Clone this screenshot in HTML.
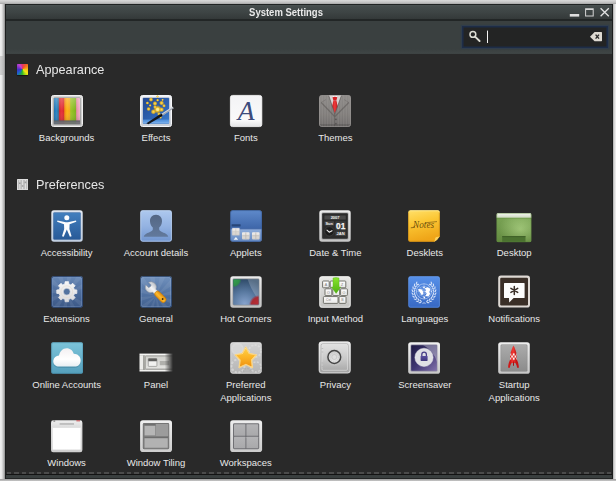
<!DOCTYPE html>
<html><head><meta charset="utf-8">
<style>
html,body{margin:0;padding:0;}
body{width:616px;height:481px;overflow:hidden;background:linear-gradient(90deg,#f1f1f1 0,#e8e8e8 1.5px,#c6c6c6 3.2px,#8c8c8c 5px,#8c8c8c 612px,#b4b4b4 613.2px,#e2e2e2 614.8px,#f0f0f0 616px);position:relative;font-family:"Liberation Sans",sans-serif;}
#topbg{position:absolute;left:0;top:0;width:616px;height:4px;background:linear-gradient(#dadada,#c6c6c6 55%,#a6a6a6);}
#botbg{position:absolute;left:0;top:479px;width:616px;height:2px;background:linear-gradient(#9a9a9a,#c8c8c8);}
#win{position:absolute;left:5px;top:4px;width:607.5px;height:475px;background:#292929;overflow:hidden;}
#title{position:absolute;left:0;top:0;right:0;height:14px;background:linear-gradient(#4b5252,#434a4a 14%,#3e4545 50%,#343939);border-top:1px solid #1f2323;}
#title .t{position:absolute;left:0;width:562px;top:1.4px;text-align:center;color:#e9e9e9;font-weight:bold;font-size:10px;line-height:14px;transform:scaleX(.95);}
#tsep{position:absolute;left:0;right:0;top:15px;height:2px;background:#222626;}
#tool{position:absolute;left:0;right:0;top:17px;height:33px;background:linear-gradient(#3a4040,#3a4040 28px,#3f4545 32px,#3c4242);}
#search{position:absolute;left:457px;top:5px;width:146px;height:21.5px;background:#232424;box-shadow:inset 0 0 0 1.6px #1d2c47,0 0 1px 1px rgba(40,58,84,.55);}
.sec{position:absolute;color:#e6e6e6;font-size:13px;line-height:16px;transform:scaleX(.975);transform-origin:0 0;white-space:nowrap;}
.lbl{position:absolute;width:110px;text-align:center;color:#e8e8e8;font-size:9.5px;line-height:13px;white-space:nowrap;}
.ic{position:absolute;width:32px;height:32px;}
.ic svg{display:block;overflow:visible;}
#dash{position:absolute;left:2px;right:2px;top:468px;height:2px;background:repeating-linear-gradient(90deg,#4b4b4b 0,#4b4b4b 4px,#2b2b2b 4.5px,#2b2b2b 7px,#4b4b4b 7.5px);}
#bot1{position:absolute;left:0;right:0;top:470px;height:1px;background:#131313;}
#bot2{position:absolute;left:0;right:0;top:471px;height:3px;background:#393e3e;border-bottom:1px solid #242626;}
#lb{position:absolute;left:0;top:0;width:1px;bottom:0;background:#1c1e1e;}
#rb{position:absolute;right:0;top:0;width:1px;bottom:0;background:#1c1e1e;}
</style></head><body>
<div id="topbg"></div><div style="position:absolute;left:0;top:56px;width:4px;height:19px;background:linear-gradient(90deg,#c9c9c9,#b4b4b4);opacity:.8"></div><div id="botbg"></div>
<div id="win">
<div id="title"><div class="t">System Settings</div><svg style="position:absolute;left:560px;top:0" viewBox="0 0 48 15" width="48" height="15">
<rect x="4.8" y="9" width="9.4" height="2.6" fill="#dedede"/>
<path d="M20.1 3.2 H28.7 V11.6 H20.1Z M21.1 5 V10.6 H27.7 V5Z" fill="#d6d6d6" fill-rule="evenodd"/>
<path d="M35.6 3.2 L43.8 11.2 M43.8 3.2 L35.6 11.2" stroke="#e2e2e2" stroke-width="1.3"/>
</svg></div>
<div id="tsep"></div>
<div id="tool"><div id="search"><svg style="position:absolute;left:0;top:0" viewBox="0 0 146 22" width="146" height="22">
<circle cx="10.9" cy="8.4" r="2.9" fill="none" stroke="#dcdcd4" stroke-width="1.5"/>
<path d="M13 10.6 L17.6 15" stroke="#dcdcd4" stroke-width="1.9" stroke-linecap="round"/>
<rect x="25" y="4.6" width="1" height="12.4" fill="#f4f4f4"/>
<path d="M128 10.7 L132.6 6 H139.4 Q140 6 140 6.6 V14.6 Q140 15.2 139.4 15.2 H132.6Z" fill="#dedad2"/>
<path d="M133.6 8.6 L137 12.6 M137 8.6 L133.6 12.6" stroke="#2a2a2a" stroke-width="1.4"/>
</svg></div></div>
<div style="position:absolute;left:12px;top:59.8px;width:11.2px;height:11.4px;border-radius:.6px;background:conic-gradient(from 0deg at 50% 48%,#e63668 0deg,#ef5a28 35deg,#f58a18 65deg,#f8c414 95deg,#f2e814 130deg,#9ad81a 155deg,#3cbc22 180deg,#1e9c5a 200deg,#1f5ed2 230deg,#3a36c4 262deg,#7a30c8 290deg,#c044d2 325deg,#e63668 360deg);box-shadow:0 1px 1px rgba(0,0,0,.5)"></div><svg style="position:absolute;left:12px;top:174.8px" viewBox="0 0 11.2 11.2" width="11.2" height="11.2">
<rect x="0" y="0" width="11.2" height="11.2" rx=".6" fill="#e2e2e2"/>
<rect x=".9" y=".9" width="9.4" height="9.4" fill="#bcbcbc"/>
<path d="M2.8 1v9.2M5.6 1v9.2M8.4 1v9.2" stroke="#e6e6e6" stroke-width=".9"/>
<path d="M2 3.4h1.6v1.6H2zM4.8 6.2h1.6v1.6H4.8zM7.6 2.6h1.6v1.6H7.6z" fill="#9c9c9c"/>
</svg>
<div class="sec" style="left:30.6px;top:58.3px">Appearance</div>
<div class="sec" style="left:30.6px;top:173.3px">Preferences</div>
<div class="ic" style="left:46.0px;top:91px"><svg viewBox="0 0 32 32" width="32" height="32"><defs>
<linearGradient id="bgF" x1="0" y1="0" x2="0" y2="1"><stop offset="0" stop-color="#e4e4e4"/><stop offset="1" stop-color="#b4b4b4"/></linearGradient>
<linearGradient id="bgS" x1="0" y1="0" x2="0" y2="1"><stop offset="0" stop-color="#fff" stop-opacity=".25"/><stop offset=".5" stop-color="#fff" stop-opacity="0"/><stop offset="1" stop-color="#000" stop-opacity=".2"/></linearGradient>
<linearGradient id="bgC" x1="0" y1="0" x2="1" y2="0">
<stop offset="0" stop-color="#1d6fae"/><stop offset=".1" stop-color="#2b86c6"/><stop offset=".17" stop-color="#3a6f9a"/>
<stop offset=".2" stop-color="#d22a2e"/><stop offset=".3" stop-color="#e8323a"/><stop offset=".38" stop-color="#d52a2c"/>
<stop offset=".41" stop-color="#f08a10"/><stop offset=".5" stop-color="#fcb414"/><stop offset=".6" stop-color="#f5a81c"/>
<stop offset=".64" stop-color="#9ec428"/><stop offset=".75" stop-color="#8cbc20"/><stop offset=".84" stop-color="#7db01e"/>
<stop offset=".87" stop-color="#e88aa8"/><stop offset="1" stop-color="#f0b4c8"/></linearGradient>
</defs>
<rect x=".5" y=".5" width="31" height="31" rx="2" fill="url(#bgF)" stroke="#f0f0f0"/>
<rect x="1.5" y="1.5" width="29" height="29" rx="1.2" fill="none" stroke="#d2d2d2" stroke-opacity=".7"/>
<rect x="2.5" y="2.5" width="27" height="27" rx="1" fill="#868686"/>
<rect x="3" y="3" width="26" height="26" rx=".6" fill="url(#bgC)"/>
<rect x="3" y="3" width="26" height="26" rx=".6" fill="url(#bgS)"/>
<rect x="3" y="25.6" width="26" height="3.4" fill="#6e7176" opacity=".92"/>
<rect x="3" y="25.6" width="26" height=".8" fill="#55585c" opacity=".8"/>
</svg></div>
<div class="lbl" style="left:6.6px;top:127.2px">Backgrounds</div>
<div class="ic" style="left:135.3px;top:91px"><svg viewBox="0 0 32 32" width="32" height="32"><defs>
<linearGradient id="efF" x1="0" y1="0" x2="0" y2="1"><stop offset="0" stop-color="#f1f3f7"/><stop offset="1" stop-color="#c9ced6"/></linearGradient>
<linearGradient id="efB" x1="0" y1="0" x2="1" y2="1"><stop offset="0" stop-color="#244890"/><stop offset=".6" stop-color="#2e64b4"/><stop offset="1" stop-color="#3b7ccc"/></linearGradient>
<radialGradient id="efG"><stop offset="0" stop-color="#ffe060"/><stop offset=".5" stop-color="#f5c020" stop-opacity=".9"/><stop offset="1" stop-color="#e0a010" stop-opacity="0"/></radialGradient>
<linearGradient id="efW" x1="0" y1="0" x2="1" y2="0"><stop offset="0" stop-color="#8a9098"/><stop offset=".5" stop-color="#f4f6f8"/><stop offset="1" stop-color="#b8bcc4"/></linearGradient>
</defs>
<rect x=".5" y=".5" width="31" height="31" rx="2" fill="url(#efF)" stroke="#f6f7fa"/>
<rect x="2.6" y="2.6" width="26.8" height="26.2" rx="1" fill="#8fa0bc"/>
<rect x="3" y="3" width="26" height="25.4" rx=".6" fill="url(#efB)"/>
<rect x="3" y="24.6" width="26" height="3.8" fill="#5b9ae2" opacity=".85"/>
<rect x="3" y="26.6" width="26" height="1.8" fill="#7fb4ee" opacity=".7"/>
<g fill="url(#efG)">
<circle cx="11" cy="4.6" r="2.4"/><circle cx="7.4" cy="8" r="1.8"/><circle cx="10.2" cy="10.4" r="1.5"/><circle cx="8.6" cy="14" r="2.2"/>
<circle cx="15" cy="8.5" r="2.6"/><circle cx="17.6" cy="5.2" r="1.6"/><circle cx="21.6" cy="8" r="2.6"/><circle cx="24" cy="10.8" r="2"/><circle cx="22.6" cy="4.8" r="1.4"/>
<circle cx="17.6" cy="14.4" r="4.4"/><circle cx="13.4" cy="16.8" r="2.8"/><circle cx="21.6" cy="14.6" r="2.6"/><circle cx="19" cy="19" r="2"/><circle cx="15" cy="12" r="2"/>
<circle cx="20.5" cy="22.4" r="1.6"/><circle cx="17.5" cy="1.5" r="1.5"/>
</g>
<circle cx="17.6" cy="14.4" r="1.6" fill="#fff3a0" opacity=".8"/>
<path d="M6.4 28.2 L20.4 19 L22 21.2 L8.4 29.2Z" fill="#15171c"/>
<path d="M20.4 19.5 L32.6 11.6 L33.6 13.2 L21.6 21.2Z" fill="#d4d8de"/>
<path d="M20.9 20.3 L33.1 12.4 L33.6 13.2 L21.6 21.2Z" fill="#9aa0aa"/>
<path d="M19.8 19.9 L21.6 18.8 L22.8 20.5 L21 21.6Z" fill="#0c0d10"/>
</svg></div>
<div class="lbl" style="left:96.0px;top:127.2px">Effects</div>
<div class="ic" style="left:224.6px;top:91px"><svg viewBox="0 0 32 32" width="32" height="32"><defs>
<linearGradient id="foF" x1="0" y1="0" x2="0" y2="1"><stop offset="0" stop-color="#f3f3f5"/><stop offset=".8" stop-color="#fafafa"/><stop offset="1" stop-color="#e4e4e6"/></linearGradient>
</defs>
<rect x=".4" y=".4" width="31.4" height="31.2" rx="2.2" fill="url(#foF)" stroke="#ffffff" stroke-width=".8"/>
<text x="16.1" y="24.7" text-anchor="middle" font-family="'Liberation Serif',serif" font-style="italic" font-size="27.5" fill="#3d4c7c">A</text>
</svg></div>
<div class="lbl" style="left:185.8px;top:127.2px">Fonts</div>
<div class="ic" style="left:313.9px;top:91px"><svg viewBox="0 0 32 32" width="32" height="32"><defs>
<linearGradient id="thF" x1="0" y1="0" x2="0" y2="1"><stop offset="0" stop-color="#8d8a88"/><stop offset=".6" stop-color="#7f7c7a"/><stop offset="1" stop-color="#6d6a69"/></linearGradient>
<pattern id="thP" width="1.6" height="4" patternUnits="userSpaceOnUse"><rect width=".5" height="4" fill="#b8b0ac" opacity=".35"/></pattern>
<linearGradient id="thT" x1="0" y1="0" x2="1" y2="0"><stop offset="0" stop-color="#c81a1e"/><stop offset=".5" stop-color="#ee3a3a"/><stop offset="1" stop-color="#b01418"/></linearGradient>
<clipPath id="thC"><rect x=".3" y=".3" width="31.6" height="31.4" rx="2.4"/></clipPath>
</defs>
<g clip-path="url(#thC)">
<rect width="32" height="32" fill="url(#thF)"/>
<rect width="32" height="32" fill="url(#thP)"/>
<path d="M9.6 0 L22.6 0 L15.8 19.2Z" fill="#f2f0f0"/>
<path d="M9.6 0 L13.4 0 L15.2 6 L12.6 9.5Z" fill="#d8d4d4"/>
<path d="M22.6 0 L18.6 0 L16.6 6 L19.4 9.5Z" fill="#d8d4d4"/>
<path d="M13.5 2.2 Q15.9 1.3 18.3 2.2 L17.4 5.6 Q15.9 6.1 14.4 5.6Z" fill="#d42226"/>
<path d="M14.4 5.6 Q15.9 6.1 17.4 5.6 L19 12 L15.9 18.9 L12.8 12Z" fill="url(#thT)"/>
<path d="M0 3 L9.6 0 L15.8 19.2 L15.8 32 L0 32Z" fill="url(#thF)"/>
<path d="M32 3 L22.6 0 L15.8 19.2 L15.8 32 L32 32Z" fill="url(#thF)"/>
<path d="M0 3 L9.6 0 L15.8 19.2 L15.8 32 L0 32Z M32 3 L22.6 0 L15.8 19.2 L15.8 32 L32 32Z" fill="url(#thP)"/>
<path d="M9.6 0 L15.8 19.2 L22.6 0" fill="none" stroke="#5a5655" stroke-width=".8" opacity=".8"/>
<path d="M2.2 7.5 L15.6 21.5" stroke="#55514f" stroke-width="1.2" opacity=".5"/>
<path d="M29.8 7.5 L16 21.5" stroke="#55514f" stroke-width="1.2" opacity=".5"/>
<path d="M2.2 7.5 L7 4.5 M29.8 7.5 L25 4.5" stroke="#5a5654" stroke-width=".8" opacity=".35"/>
<path d="M15.8 19.2 L15.8 32" stroke="#5f5b5a" stroke-width=".7"/>
<circle cx="16.9" cy="24.3" r=".9" fill="#5a5655"/><circle cx="16.9" cy="28.6" r=".9" fill="#5a5655"/>
<rect y="29" width="32" height="3" fill="#000" opacity=".12"/>
</g>
<rect x=".5" y=".5" width="31" height="31" rx="2.2" fill="none" stroke="#9c9998" stroke-opacity=".6"/>
</svg></div>
<div class="lbl" style="left:275.4px;top:127.2px">Themes</div>
<div class="ic" style="left:46.0px;top:206px"><svg viewBox="0 0 32 32" width="32" height="32"><defs>
<linearGradient id="acB" x1="0" y1="0" x2="0" y2="1"><stop offset="0" stop-color="#427fbe"/><stop offset="1" stop-color="#285a98"/></linearGradient>
<linearGradient id="acF" x1="0" y1="0" x2="0" y2="1"><stop offset="0" stop-color="#e4ebf4"/><stop offset="1" stop-color="#c4d2e4"/></linearGradient>
</defs>
<rect x=".3" y=".3" width="31.4" height="31.4" rx="2.6" fill="url(#acF)"/>
<rect x="2.4" y="2.4" width="27.2" height="27.2" rx="1" fill="url(#acB)"/>
<rect x="2.4" y="2.4" width="27.2" height="27.2" rx="1" fill="none" stroke="#2a5288" stroke-width=".6" opacity=".6"/>
<g fill="#fbfcfe">
<circle cx="15.8" cy="7.7" r="2.5"/>
<path d="M6.4 10.4 L13.6 12 Q15.8 12.5 18 12 L25 10.4 L25.3 11.8 L18.6 14.2 L18.4 19 L20.6 26.3 L18.9 26.8 L15.8 19.6 L12.7 26.8 L11 26.3 L13.2 19 L13 14.2 L6.1 11.8Z"/>
</g>
</svg></div>
<div class="lbl" style="left:6.6px;top:242.2px">Accessibility</div>
<div class="ic" style="left:135.3px;top:206px"><svg viewBox="0 0 32 32" width="32" height="32"><defs>
<linearGradient id="adB" x1="0" y1="0" x2="0" y2="1"><stop offset="0" stop-color="#adc8ee"/><stop offset=".5" stop-color="#94b3e2"/><stop offset="1" stop-color="#7195cf"/></linearGradient>
<linearGradient id="adS" x1="0" y1="0" x2="0" y2="1"><stop offset="0" stop-color="#546784"/><stop offset="1" stop-color="#62799c"/></linearGradient>
</defs>
<rect x=".3" y=".3" width="31.6" height="31.4" rx="2.4" fill="url(#adB)"/>
<rect x=".8" y=".8" width="30.6" height="30.4" rx="2" fill="none" stroke="#c6d9f4" stroke-opacity=".6"/>
<path d="M16 4.8 C20 4.8 22.2 7.8 22 11.4 C21.8 14.4 20.6 16.2 19.2 17.4 L19.2 19.6 C19.6 21.4 23 22.6 25.4 23.6 C27 24.4 28 25.6 28.2 26.8 L3.8 26.8 C4 25.6 5 24.4 6.6 23.6 C9 22.6 12.4 21.4 12.8 19.6 L12.8 17.4 C11.4 16.2 10.2 14.4 10 11.4 C9.8 7.8 12 4.8 16 4.8Z" fill="url(#adS)"/>
</svg></div>
<div class="lbl" style="left:96.0px;top:242.2px">Account details</div>
<div class="ic" style="left:224.6px;top:206px"><svg viewBox="0 0 32 32" width="32" height="32"><defs>
<linearGradient id="apT" x1="0" y1="0" x2="0" y2="1"><stop offset="0" stop-color="#5f8acb"/><stop offset="1" stop-color="#3d65a8"/></linearGradient>
<linearGradient id="apL" x1="0" y1="0" x2="0" y2="1"><stop offset="0" stop-color="#90aedb"/><stop offset="1" stop-color="#6388c2"/></linearGradient>
<linearGradient id="apW" x1="0" y1="0" x2="0" y2="1"><stop offset="0" stop-color="#f0eeec"/><stop offset="1" stop-color="#d2cdc8"/></linearGradient>
<clipPath id="apC"><rect x=".3" y=".3" width="31.6" height="31.4" rx="2.6"/></clipPath>
</defs>
<g clip-path="url(#apC)">
<rect width="32" height="19" fill="url(#apT)"/>
<rect y="18.8" width="32" height="13.2" fill="url(#apL)"/>
<rect y="18.6" width="32" height=".7" fill="#2c4f8e" opacity=".7"/>
<rect x="1.6" y="14.3" width="9" height="2.1" rx=".3" fill="#274678"/>
<rect x="2" y="18" width="7.7" height="7.6" rx=".8" fill="url(#apW)" stroke="#8aa0c4" stroke-width=".4"/>
<rect x="12" y="22.2" width="7.6" height="7.2" rx=".8" fill="url(#apW)"/>
<rect x="22" y="22.2" width="7.6" height="7.2" rx=".8" fill="url(#apW)"/>
<path d="M15.8 22.4v6.8M12.2 25.8h7.2M25.8 22.4v6.8M22.2 25.8h7.2" stroke="#b9b4b0" stroke-width=".7"/>
<path d="M5.8 18.4v6.8M2.3 21.8h7.2" stroke="#c4c0bc" stroke-width=".6"/>
<path d="M3.6 29.8 L5.9 27 L8.2 29.8Z" fill="#eef3fa"/>
</g>
<rect x=".6" y=".6" width="30.8" height="30.8" rx="2.3" fill="none" stroke="#3a5f9e" stroke-width=".7" opacity=".8"/>
</svg></div>
<div class="lbl" style="left:185.8px;top:242.2px">Applets</div>
<div class="ic" style="left:313.9px;top:206px"><svg viewBox="0 0 32 32" width="32" height="32"><defs>
<linearGradient id="dtF" x1="0" y1="0" x2="0" y2="1"><stop offset="0" stop-color="#ededed"/><stop offset="1" stop-color="#c6c6c6"/></linearGradient>
</defs>
<rect x=".3" y=".3" width="31.4" height="31.4" rx="2.6" fill="url(#dtF)"/>
<rect x="2.6" y="2.6" width="26.8" height="26.8" rx="1.2" fill="#9a9a9a"/>
<rect x="3.2" y="3.2" width="25.6" height="25.6" rx="1" fill="#2b2b2b"/>
<rect x="5.4" y="5.4" width="21.4" height="4" rx=".5" fill="#4a4a4a"/>
<rect x="5.4" y="11.2" width="9.6" height="4.2" rx=".5" fill="#454545"/>
<rect x="16.4" y="11.2" width="10.4" height="9.2" rx=".6" fill="#3c3c3c"/>
<rect x="16.4" y="21.6" width="10.4" height="4.4" rx=".5" fill="#454545"/>
<circle cx="10.4" cy="21.4" r="4.7" fill="#1c1c1c" stroke="#4a4a4a" stroke-width=".6"/>
<path d="M8 20.2 L10.2 22.2 L13 20.7" fill="none" stroke="#f2f2f2" stroke-width="1.1" stroke-linecap="round" stroke-linejoin="round"/>
<g font-family="'Liberation Sans',sans-serif" font-weight="bold" fill="#f4f4f4" text-anchor="middle">
<text x="16.1" y="8.7" font-size="4">2007</text>
<text x="10.2" y="14.6" font-size="3.9">Sun</text>
<text x="21.7" y="19.2" font-size="8.8" textLength="9.2" lengthAdjust="spacingAndGlyphs" stroke="#f4f4f4" stroke-width=".25">01</text>
<text x="21.6" y="25.3" font-size="4">JAN</text>
</g>
</svg></div>
<div class="lbl" style="left:275.4px;top:242.2px">Date &amp; Time</div>
<div class="ic" style="left:403.2px;top:206px"><svg viewBox="0 0 32 32" width="32" height="32"><defs>
<linearGradient id="dkB" x1="0" y1="0" x2=".25" y2="1"><stop offset="0" stop-color="#ffe06a"/><stop offset=".45" stop-color="#fbc633"/><stop offset="1" stop-color="#efa518"/></linearGradient>
<linearGradient id="dkC" x1="0" y1="0" x2="1" y2="1"><stop offset="0" stop-color="#ffe27a"/><stop offset="1" stop-color="#f6bd3a"/></linearGradient>
</defs>
<path d="M2.2 .3 H29.8 Q31.8 .3 31.8 2.3 V26.5 L26.5 31.7 H2.2 Q.2 31.7 .2 29.7 V2.3 Q.2 .3 2.2 .3Z" fill="url(#dkB)"/>
<path d="M2.2 .8 H29.8 Q31.3 .8 31.3 2.3" fill="none" stroke="#ffeb9a" stroke-width=".9" opacity=".9"/>
<path d="M.7 2.3 V29.7 Q.7 31.2 2.2 31.2 H26.3 L31.3 26.3 V2.3" fill="none" stroke="#d68f10" stroke-width=".7" opacity=".7"/>
<path d="M31.8 26.2 Q28.5 27.2 27.6 27.6 Q27 29.5 26.3 31.7 Q29.6 30.4 31.8 26.2Z" fill="url(#dkC)"/>
<text x="15.6" y="17.8" text-anchor="middle" font-family="'Liberation Serif',serif" font-style="italic" font-size="10" textLength="21" lengthAdjust="spacingAndGlyphs" fill="#4a3306" fill-opacity=".82">Notes</text>
<path d="M17 12.8 L29 11.6" stroke="#4a3306" stroke-width=".5"/>
<path d="M2.8 17.8 Q5 18.4 7.4 15.6" fill="none" stroke="#4a3306" stroke-width=".6"/>
</svg></div>
<div class="lbl" style="left:364.8px;top:242.2px">Desklets</div>
<div class="ic" style="left:492.5px;top:206px"><svg viewBox="0 0 32 32" width="32" height="32"><defs>
<radialGradient id="dsG" cx=".68" cy=".55" r=".6"><stop offset="0" stop-color="#a2cc76"/><stop offset="1" stop-color="#6f9c47"/></radialGradient>
<linearGradient id="dsT" x1="0" y1="0" x2="0" y2="1"><stop offset="0" stop-color="#f6f8f2"/><stop offset="1" stop-color="#cdd8c0"/></linearGradient>
<linearGradient id="dsV" x1="0" y1="0" x2="0" y2="1"><stop offset="0" stop-color="#fff" stop-opacity=".08"/><stop offset="1" stop-color="#000" stop-opacity=".12"/></linearGradient>
<clipPath id="dsC"><rect x="-1.6" y="3.1" width="35.1" height="29.1" rx="1.8"/></clipPath>
</defs>
<g clip-path="url(#dsC)">
<rect x="-1.6" y="3.1" width="35.1" height="29.1" fill="url(#dsG)"/>
<rect x="-1.6" y="3.1" width="35.1" height="29.1" fill="url(#dsV)"/>
<rect x="-1.6" y="3.1" width="35.1" height="4.7" fill="url(#dsT)"/>
<rect x="-1.6" y="7.8" width="35.1" height=".8" fill="#5f8a3a" opacity=".55"/>
<rect x="4.2" y="26.2" width="23.3" height="6" fill="#4b7230"/>
<rect x="4.2" y="26.2" width="23.3" height=".9" fill="#3c5e26"/>
</g>
<rect x="-1.2" y="3.5" width="34.3" height="28.3" rx="1.5" fill="none" stroke="#5d8a3a" stroke-width=".7" opacity=".5"/>
</svg></div>
<div class="lbl" style="left:454.2px;top:242.2px">Desktop</div>
<div class="ic" style="left:46.0px;top:272px"><svg viewBox="0 0 32 32" width="32" height="32"><defs>
<linearGradient id="exB" x1="0" y1="0" x2="0" y2="1"><stop offset="0" stop-color="#6888b6"/><stop offset=".55" stop-color="#4b6a9a"/><stop offset="1" stop-color="#3c5886"/></linearGradient>
<linearGradient id="exG" x1="0" y1="0" x2="0" y2="1"><stop offset="0" stop-color="#f6f6f7"/><stop offset="1" stop-color="#d9dade"/></linearGradient>
<clipPath id="exC"><rect x=".3" y=".3" width="31.6" height="31.4" rx="2.4"/></clipPath>
</defs>
<g clip-path="url(#exC)">
<rect width="32" height="32" fill="url(#exB)"/>
<path d="M13.85 8.05 L14.07 5.65 L17.53 5.65 L17.75 8.05 L19.83 8.91 L21.69 7.37 L24.13 9.81 L22.59 11.67 L23.45 13.75 L25.85 13.97 L25.85 17.43 L23.45 17.65 L22.59 19.73 L24.13 21.59 L21.69 24.03 L19.83 22.49 L17.75 23.35 L17.53 25.75 L14.07 25.75 L13.85 23.35 L11.77 22.49 L9.91 24.03 L7.47 21.59 L9.01 19.73 L8.15 17.65 L5.75 17.43 L5.75 13.97 L8.15 13.75 L9.01 11.67 L7.47 9.81 L9.91 7.37 L11.77 8.91Z M16 17 L50.6 37.0 L44.3 45.3Z M16 17 L36.0 51.6 L26.4 55.6Z M16 17 L16.0 57.0 L5.6 55.6Z M16 17 L-4.0 51.6 L-12.3 45.3Z M16 17 L-18.6 37.0 L-22.6 27.4Z M16 17 L-24.0 17.0 L-22.6 6.6Z M16 17 L-18.6 -3.0 L-12.3 -11.3Z M16 17 L-4.0 -17.6 L5.6 -21.6Z M16 17 L16.0 -23.0 L26.4 -21.6Z M16 17 L36.0 -17.6 L44.3 -11.3Z M16 17 L50.6 -3.0 L54.6 6.6Z" fill="#fff" opacity=".07"/>
</g>
<rect x=".6" y=".6" width="30.9" height="30.8" rx="2.2" fill="none" stroke="#263e66" stroke-width=".8"/>
<rect x="1.5" y="1.5" width="29" height="29" rx="1.5" fill="none" stroke="#86a7d4" stroke-width=".6" opacity=".55"/>
<path d="M13.85 8.05 L14.07 5.65 L17.53 5.65 L17.75 8.05 L19.83 8.91 L21.69 7.37 L24.13 9.81 L22.59 11.67 L23.45 13.75 L25.85 13.97 L25.85 17.43 L23.45 17.65 L22.59 19.73 L24.13 21.59 L21.69 24.03 L19.83 22.49 L17.75 23.35 L17.53 25.75 L14.07 25.75 L13.85 23.35 L11.77 22.49 L9.91 24.03 L7.47 21.59 L9.01 19.73 L8.15 17.65 L5.75 17.43 L5.75 13.97 L8.15 13.75 L9.01 11.67 L7.47 9.81 L9.91 7.37 L11.77 8.91Z M19.10 15.7 A3.3 3.3 0 1 0 12.50 15.7 A3.3 3.3 0 1 0 19.10 15.7Z" fill="url(#exG)" fill-rule="evenodd" stroke="url(#exG)" stroke-width=".8" stroke-linejoin="round"/>
<circle cx="15.8" cy="15.7" r="3.1" fill="#52729f"/>
<circle cx="15.8" cy="15.7" r="5.9" fill="none" stroke="#e3d6c6" stroke-width=".7" opacity=".7"/>
<circle cx="15.8" cy="15.7" r="3.4" fill="none" stroke="#c9ccd4" stroke-width=".6"/>
</svg></div>
<div class="lbl" style="left:6.6px;top:308.2px">Extensions</div>
<div class="ic" style="left:135.3px;top:272px"><svg viewBox="0 0 32 32" width="32" height="32"><defs>
<linearGradient id="geB" x1="0" y1="0" x2="0" y2="1"><stop offset="0" stop-color="#7292bd"/><stop offset=".55" stop-color="#5273a3"/><stop offset="1" stop-color="#41608f"/></linearGradient>
<linearGradient id="geS" x1="0" y1="0" x2="1" y2="0"><stop offset="0" stop-color="#c9cdd3"/><stop offset=".5" stop-color="#f4f5f7"/><stop offset="1" stop-color="#b9bec6"/></linearGradient>
<linearGradient id="geO" x1="0" y1="0" x2="1" y2="0"><stop offset="0" stop-color="#e8930f"/><stop offset=".45" stop-color="#fdbb2e"/><stop offset="1" stop-color="#e08a0c"/></linearGradient>
<clipPath id="geC"><rect x=".3" y=".3" width="31.6" height="31.4" rx="2.4"/></clipPath>
</defs>
<g clip-path="url(#geC)">
<rect width="32" height="32" fill="url(#geB)"/>
<path d="M16 20 L55.2 27.9 L51.8 37.8Z M16 20 L46.0 46.5 L38.1 53.3Z M16 20 L28.7 57.9 L18.5 59.9Z M16 20 L8.1 59.2 L-1.8 55.8Z M16 20 L-10.5 50.0 L-17.3 42.1Z M16 20 L-21.9 32.7 L-23.9 22.5Z M16 20 L-23.2 12.1 L-19.8 2.2Z M16 20 L-14.0 -6.5 L-6.1 -13.3Z M16 20 L3.3 -17.9 L13.5 -19.9Z M16 20 L23.9 -19.2 L33.8 -15.8Z M16 20 L42.5 -10.0 L49.3 -2.1Z M16 20 L53.9 7.3 L55.9 17.5Z" fill="#fff" opacity=".07"/>
</g>
<rect x=".6" y=".6" width="30.9" height="30.8" rx="2.2" fill="none" stroke="#2a4268" stroke-width=".8"/>
<rect x="1.5" y="1.5" width="29" height="29" rx="1.5" fill="none" stroke="#9ab6dc" stroke-width=".6" opacity=".5"/>
<g transform="translate(10.9 11.3) rotate(-45)">
<path d="M-1.9 -5.2 L-1.9 -1.4 Q0 -.2 1.9 -1.4 L1.9 -5.2 A5.4 5.4 0 0 1 2.2 4.9 L2.2 7.5 L-2.2 7.5 L-2.2 4.9 A5.4 5.4 0 0 1 -1.9 -5.2Z" fill="url(#geS)" stroke="#8e949e" stroke-width=".5"/>
<rect x="-2.9" y="6.6" width="5.8" height="13.6" rx="2.8" fill="url(#geO)" stroke="#b8730a" stroke-width=".5"/>
<circle cx="0" cy="16.6" r=".95" fill="#4a3008"/>
</g>
</svg></div>
<div class="lbl" style="left:96.0px;top:308.2px">General</div>
<div class="ic" style="left:224.6px;top:272px"><svg viewBox="0 0 32 32" width="32" height="32"><defs>
<linearGradient id="hcF" x1="0" y1="0" x2="0" y2="1"><stop offset="0" stop-color="#ececec"/><stop offset="1" stop-color="#c2c2c2"/></linearGradient>
<radialGradient id="hcB" cx=".45" cy=".95" r=".95"><stop offset="0" stop-color="#86a2cc"/><stop offset=".5" stop-color="#58789f"/><stop offset="1" stop-color="#2e4a68"/></radialGradient>
<radialGradient id="hcG" cx="0" cy="0" r="1"><stop offset="0" stop-color="#35a04e"/><stop offset=".75" stop-color="#2f8f48"/><stop offset="1" stop-color="#2a9444" stop-opacity="0"/></radialGradient>
<radialGradient id="hcR" cx="1" cy="1" r="1"><stop offset="0" stop-color="#be2c34"/><stop offset=".75" stop-color="#a82c34"/><stop offset="1" stop-color="#b02830" stop-opacity="0"/></radialGradient>
<clipPath id="hcC"><rect x="3.2" y="3.2" width="25.6" height="25.6" rx="1"/></clipPath>
</defs>
<rect x=".3" y=".3" width="31.4" height="31.4" rx="2.6" fill="url(#hcF)"/>
<rect x="2.6" y="2.6" width="26.8" height="26.8" rx="1.4" fill="#8a8e94"/>
<g clip-path="url(#hcC)">
<rect x="3" y="3" width="26" height="26" fill="url(#hcB)"/>
<path d="M17.5 3 L29 3 L29 24 Q22 16 17.5 3Z" fill="#fff" opacity=".2"/>
<rect x="3.2" y="3.2" width="8.4" height="8.4" fill="url(#hcG)"/>
<rect x="19" y="19" width="9.8" height="9.8" fill="url(#hcR)"/>
</g>
</svg></div>
<div class="lbl" style="left:185.8px;top:308.2px">Hot Corners</div>
<div class="ic" style="left:313.9px;top:272px"><svg viewBox="0 0 32 32" width="32" height="32"><defs>
<linearGradient id="imF" x1="0" y1="0" x2="0" y2="1"><stop offset="0" stop-color="#e9e9e7"/><stop offset="1" stop-color="#c4c4c2"/></linearGradient>
<linearGradient id="imK" x1="0" y1="0" x2="0" y2="1"><stop offset="0" stop-color="#ffffff"/><stop offset="1" stop-color="#e6e6e4"/></linearGradient>
<linearGradient id="imA" x1="0" y1="0" x2="0" y2="1"><stop offset="0" stop-color="#8ae62e"/><stop offset="1" stop-color="#4fae14"/></linearGradient>
</defs>
<rect x=".3" y=".3" width="31.4" height="31.4" rx="2.8" fill="url(#imF)"/>
<rect x=".8" y=".8" width="30.4" height="30.4" rx="2.4" fill="none" stroke="#f4f4f2" stroke-width=".7"/>
<g fill="url(#imK)" stroke="#66665f" stroke-width=".9">
<rect x="3.6" y="5" width="6.6" height="6.8" rx=".8"/><rect x="11.2" y="5" width="7.4" height="6.8" rx=".8"/><rect x="19.6" y="5" width="7.2" height="6.8" rx=".8"/>
<rect x="6" y="12.8" width="6.8" height="6.8" rx=".8"/><rect x="13.8" y="12.8" width="6.8" height="6.8" rx=".8"/><rect x="21.6" y="12.8" width="6.8" height="6.8" rx=".8"/>
<rect x="4.4" y="20.6" width="14.6" height="6.8" rx=".8"/><rect x="20" y="20.6" width="7" height="6.8" rx=".8"/>
</g>
<g font-family="'Liberation Sans',sans-serif" font-size="3.6" fill="#7c7c78" text-anchor="middle">
<text x="6.9" y="9.8">A</text><text x="23.2" y="9.8">Z</text><text x="9.4" y="17.6">O</text><text x="25" y="17.6">O</text><text x="9.6" y="25.3" font-size="3.2">Ctrl</text><text x="23.5" y="25.3">B</text>
</g>
<path d="M14 2 Q17 .9 20 2 L20 11 L21.8 11 L17.1 17.4 L12.4 11 L14 11Z" fill="url(#imA)" stroke="#58b81a" stroke-width=".4"/>
</svg></div>
<div class="lbl" style="left:275.4px;top:308.2px">Input Method</div>
<div class="ic" style="left:403.2px;top:272px"><svg viewBox="0 0 32 32" width="32" height="32"><defs>
<linearGradient id="laB" x1="0" y1="0" x2="0" y2="1"><stop offset="0" stop-color="#5790e8"/><stop offset="1" stop-color="#3768c4"/></linearGradient>
</defs>
<rect x=".3" y=".3" width="31.6" height="31.4" rx="2.2" fill="url(#laB)"/>
<rect x=".8" y=".8" width="30.6" height="30.4" rx="1.8" fill="none" stroke="#79aaf4" stroke-width=".6" opacity=".6"/>
<g fill="#f2f6ff" opacity=".82"><ellipse cx="12.72" cy="24.82" rx="1.55" ry=".62" transform="rotate(-132.0 12.72 24.82)"/><ellipse cx="12.03" cy="26.70" rx="1.55" ry=".62" transform="rotate(-188.0 12.03 26.70)"/><ellipse cx="10.49" cy="23.66" rx="1.55" ry=".62" transform="rotate(-117.0 10.49 23.66)"/><ellipse cx="9.35" cy="25.30" rx="1.55" ry=".62" transform="rotate(-173.0 9.35 25.30)"/><ellipse cx="8.65" cy="21.97" rx="1.55" ry=".62" transform="rotate(-102.0 8.65 21.97)"/><ellipse cx="7.11" cy="23.26" rx="1.55" ry=".62" transform="rotate(-158.0 7.11 23.26)"/><ellipse cx="7.30" cy="19.86" rx="1.55" ry=".62" transform="rotate(-87.0 7.30 19.86)"/><ellipse cx="5.49" cy="20.70" rx="1.55" ry=".62" transform="rotate(-143.0 5.49 20.70)"/><ellipse cx="6.55" cy="17.47" rx="1.55" ry=".62" transform="rotate(-72.0 6.55 17.47)"/><ellipse cx="4.58" cy="17.81" rx="1.55" ry=".62" transform="rotate(-128.0 4.58 17.81)"/><ellipse cx="6.44" cy="14.96" rx="1.55" ry=".62" transform="rotate(-57.0 6.44 14.96)"/><ellipse cx="4.44" cy="14.79" rx="1.55" ry=".62" transform="rotate(-113.0 4.44 14.79)"/><ellipse cx="6.98" cy="12.52" rx="1.55" ry=".62" transform="rotate(-42.0 6.98 12.52)"/><ellipse cx="5.10" cy="11.83" rx="1.55" ry=".62" transform="rotate(-98.0 5.10 11.83)"/><ellipse cx="8.14" cy="10.29" rx="1.55" ry=".62" transform="rotate(-27.0 8.14 10.29)"/><ellipse cx="6.50" cy="9.15" rx="1.55" ry=".62" transform="rotate(-83.0 6.50 9.15)"/><ellipse cx="9.83" cy="8.45" rx="1.55" ry=".62" transform="rotate(-12.0 9.83 8.45)"/><ellipse cx="8.54" cy="6.91" rx="1.55" ry=".62" transform="rotate(-68.0 8.54 6.91)"/><ellipse cx="19.28" cy="24.82" rx="1.55" ry=".62" transform="rotate(-48.0 19.28 24.82)"/><ellipse cx="19.97" cy="26.70" rx="1.55" ry=".62" transform="rotate(8.0 19.97 26.70)"/><ellipse cx="21.51" cy="23.66" rx="1.55" ry=".62" transform="rotate(-63.0 21.51 23.66)"/><ellipse cx="22.65" cy="25.30" rx="1.55" ry=".62" transform="rotate(-7.0 22.65 25.30)"/><ellipse cx="23.35" cy="21.97" rx="1.55" ry=".62" transform="rotate(-78.0 23.35 21.97)"/><ellipse cx="24.89" cy="23.26" rx="1.55" ry=".62" transform="rotate(-22.0 24.89 23.26)"/><ellipse cx="24.70" cy="19.86" rx="1.55" ry=".62" transform="rotate(-93.0 24.70 19.86)"/><ellipse cx="26.51" cy="20.70" rx="1.55" ry=".62" transform="rotate(-37.0 26.51 20.70)"/><ellipse cx="25.45" cy="17.47" rx="1.55" ry=".62" transform="rotate(-108.0 25.45 17.47)"/><ellipse cx="27.42" cy="17.81" rx="1.55" ry=".62" transform="rotate(-52.0 27.42 17.81)"/><ellipse cx="25.56" cy="14.96" rx="1.55" ry=".62" transform="rotate(-123.0 25.56 14.96)"/><ellipse cx="27.56" cy="14.79" rx="1.55" ry=".62" transform="rotate(-67.0 27.56 14.79)"/><ellipse cx="25.02" cy="12.52" rx="1.55" ry=".62" transform="rotate(-138.0 25.02 12.52)"/><ellipse cx="26.90" cy="11.83" rx="1.55" ry=".62" transform="rotate(-82.0 26.90 11.83)"/><ellipse cx="23.86" cy="10.29" rx="1.55" ry=".62" transform="rotate(-153.0 23.86 10.29)"/><ellipse cx="25.50" cy="9.15" rx="1.55" ry=".62" transform="rotate(-97.0 25.50 9.15)"/><ellipse cx="22.17" cy="8.45" rx="1.55" ry=".62" transform="rotate(-168.0 22.17 8.45)"/><ellipse cx="23.46" cy="6.91" rx="1.55" ry=".62" transform="rotate(-112.0 23.46 6.91)"/></g>
<path d="M14.4 27.4 Q16 26.2 17.6 27.4" fill="none" stroke="#f2f6ff" stroke-width=".8" opacity=".8"/>
<g fill="none" stroke="#eef4ff" stroke-linecap="round">
<circle cx="16" cy="15.4" r="7.6" stroke-width=".7" opacity=".7"/>
<circle cx="16" cy="15.4" r="5.2" stroke-width=".5" opacity=".55"/>
<circle cx="16" cy="15.4" r="2.7" stroke-width=".5" opacity=".55"/>
<path d="M16 7.8v15.2M8.4 15.4h15.2M10.6 10l10.8 10.8M21.4 10L10.6 20.8" stroke-width=".5" opacity=".5"/>
</g>
<g fill="#ffffff">
<path d="M9.8 13.6 Q11.6 12.6 13.8 13.4 L14.8 15 L15.4 17.4 L14 19.6 L12.6 17.6 L11.4 15.4Z"/>
<path d="M16.6 12.2 L19.6 11.2 L22 12.4 L22.4 14.4 L20.8 15.2 L22.2 17.8 L20.4 20.4 L17.2 20 L18.8 17.4 L17 15.6 L18.2 14Z"/>
<path d="M14.4 11.6 L16.4 10.2 L17 12.2Z"/>
<path d="M15 20.4 L17.4 21 L16.4 22.8Z"/>
</g>
</svg></div>
<div class="lbl" style="left:364.8px;top:308.2px">Languages</div>
<div class="ic" style="left:492.5px;top:272px"><svg viewBox="0 0 32 32" width="32" height="32">
<rect x=".2" y="-.4" width="31.8" height="32" rx="2.8" fill="#ddd8d3"/>
<rect x="2.2" y="1.7" width="27.8" height="27.8" rx="1.2" fill="#3a2f27"/>
<path d="M6.6 7 H26 Q26.6 7 26.6 7.6 V21.4 Q26.6 22 26 22 H15.6 L11.2 26.4 L11 22 H6.6 Q6 22 6 21.4 V7.6 Q6 7 6.6 7Z" fill="#fdfdfc"/>
<g stroke="#3a2f27" stroke-width="1.5" stroke-linecap="round"><path d="M16.3 10.4v8M12.9 12.4l6.8 4M19.7 12.4l-6.8 4"/></g>
</svg></div>
<div class="lbl" style="left:454.2px;top:308.2px">Notifications</div>
<div class="ic" style="left:46.0px;top:338px"><svg viewBox="0 0 32 32" width="32" height="32"><defs>
<linearGradient id="onB" x1="0" y1="0" x2="0" y2="1"><stop offset="0" stop-color="#7cc4da"/><stop offset="1" stop-color="#559fbc"/></linearGradient>
<linearGradient id="onC" x1="0" y1="0" x2="0" y2="1"><stop offset="0" stop-color="#f3f0f2"/><stop offset=".6" stop-color="#ffffff"/><stop offset="1" stop-color="#e6eef2"/></linearGradient>
</defs>
<rect x=".2" y=".2" width="31.8" height="31.6" rx="1.8" fill="url(#onB)"/>
<rect x=".7" y=".7" width="30.8" height="30.6" rx="1.5" fill="none" stroke="#3f87a4" stroke-width=".7" opacity=".55"/>
<path d="M8.6 25 C4.2 25 1.6 21.9 2.2 18.4 C2.7 15.6 5 13.8 8 13.6 C8.8 9.6 11.6 6.2 15.6 6.2 C19.2 6.2 21.8 8.4 22.8 11.8 C26.6 11.8 29.8 14.6 29.8 18.6 C29.8 22.2 27.2 25 23.4 25Z" fill="#3b7e98" opacity=".45" transform="translate(0 .9)"/>
<path d="M8.6 24.6 C4.2 24.6 1.8 21.7 2.3 18.4 C2.8 15.6 5 13.8 8 13.6 C8.8 9.6 11.6 6.2 15.6 6.2 C19.2 6.2 21.8 8.4 22.8 11.8 C26.6 11.8 29.7 14.6 29.7 18.4 C29.7 22 27.2 24.6 23.4 24.6Z" fill="url(#onC)"/>
</svg></div>
<div class="lbl" style="left:6.6px;top:374.2px">Online Accounts</div>
<div class="ic" style="left:135.3px;top:338px"><svg viewBox="0 0 32 32" width="32" height="32"><defs>
<linearGradient id="paM" x1="0" y1="0" x2="1" y2="0"><stop offset="0" stop-color="#fff" stop-opacity="0"/><stop offset=".05" stop-color="#fff"/><stop offset=".76" stop-color="#fff"/><stop offset="1" stop-color="#fff" stop-opacity="0"/></linearGradient>
<mask id="paK"><rect x="-1.4" y="10" width="34.4" height="21" fill="url(#paM)"/></mask>
<linearGradient id="paB" x1="0" y1="0" x2="0" y2="1"><stop offset="0" stop-color="#fbfbfa"/><stop offset=".09" stop-color="#f0f0ee"/><stop offset=".12" stop-color="#b4b4b0"/><stop offset=".16" stop-color="#d9d9d6"/><stop offset=".86" stop-color="#cbcbc7"/><stop offset=".9" stop-color="#b4b4b0"/><stop offset=".93" stop-color="#f0f0ee"/><stop offset="1" stop-color="#fafaf9"/></linearGradient>
<linearGradient id="paI" x1="0" y1="0" x2="0" y2="1"><stop offset="0" stop-color="#d0d0cc"/><stop offset="1" stop-color="#e4e4e1"/></linearGradient>
</defs>
<g mask="url(#paK)">
<rect x="-1.4" y="11.6" width="34.4" height="17.9" fill="url(#paB)"/>
<rect x="-1.4" y="13.6" width="4.6" height="13.8" fill="#ecece9"/>
<rect x="3.4" y="13.4" width="1.1" height="14.4" fill="#84847f"/>
<rect x="5.4" y="14" width="28" height="13" rx="1" fill="url(#paI)" stroke="#90908c" stroke-width=".7"/>
<rect x="8.3" y="16.5" width="8.6" height="7.9" rx=".6" fill="#f1f1ef" stroke="#80807c" stroke-width=".6"/>
<rect x="8.3" y="16.5" width="8.6" height="2.7" rx=".5" fill="#5e5e5c"/>
<rect x="19.8" y="19" width="9.4" height="4.2" fill="#b0b0ac"/>
</g>
</svg></div>
<div class="lbl" style="left:96.0px;top:374.2px">Panel</div>
<div class="ic" style="left:224.6px;top:338px"><svg viewBox="0 0 32 32" width="32" height="32"><defs>
<linearGradient id="prF" x1="0" y1="0" x2="0" y2="1"><stop offset="0" stop-color="#d3d3d3"/><stop offset="1" stop-color="#b5b5b5"/></linearGradient>
<linearGradient id="prS" x1="0" y1="0" x2="0" y2="1"><stop offset="0" stop-color="#ffd24a"/><stop offset=".5" stop-color="#fbb426"/><stop offset="1" stop-color="#ee8f10"/></linearGradient>
<clipPath id="prC"><rect x=".3" y=".3" width="31.4" height="31.4" rx="2.4"/></clipPath>
</defs>
<rect x=".3" y=".3" width="31.4" height="31.4" rx="2.4" fill="url(#prF)"/>
<g clip-path="url(#prC)" fill="none" stroke="#e2e2e2" opacity=".6">
<circle cx="7.5" cy="7" r="5.4" stroke-width="1.6" fill="#dcdcdc"/>
<circle cx="25" cy="9" r="6" stroke-width="1.8" stroke-dasharray="2 1.4"/>
<circle cx="8" cy="24" r="6.5" stroke-width="2" stroke-dasharray="2.2 1.5"/>
<circle cx="26" cy="25" r="5" stroke-width="1.6" stroke-dasharray="2 1.4"/>
<circle cx="17" cy="30" r="3.6" stroke-width="1.4" stroke="#a8a8a8" stroke-dasharray="1.6 1.2"/>
</g>
<rect x=".8" y=".8" width="30.4" height="30.4" rx="2" fill="none" stroke="#e4e4e4" stroke-width=".7" opacity=".8"/>
<path d="M15.80 5.10 L19.39 11.46 L26.55 12.91 L21.60 18.29 L22.44 25.54 L15.80 22.50 L9.16 25.54 L10.00 18.29 L5.05 12.91 L12.21 11.46Z" fill="url(#prS)" stroke="#ffe7a6" stroke-width="1.3" stroke-linejoin="round"/>
<path d="M15.80 5.10 L19.39 11.46 L26.55 12.91 L21.60 18.29 L22.44 25.54 L15.80 22.50 L9.16 25.54 L10.00 18.29 L5.05 12.91 L12.21 11.46Z" fill="none" stroke="#e89a18" stroke-width=".4" stroke-linejoin="round" opacity=".7"/>
</svg></div>
<div class="lbl" style="left:185.8px;top:374.2px">Preferred<br>Applications</div>
<div class="ic" style="left:313.9px;top:338px"><svg viewBox="0 0 32 32" width="32" height="32"><defs>
<linearGradient id="pvF" x1="0" y1="0" x2="0" y2="1"><stop offset="0" stop-color="#e6e6e6"/><stop offset=".55" stop-color="#c9c9c9"/><stop offset="1" stop-color="#a2a2a2"/></linearGradient>
<linearGradient id="pvD" x1="0" y1="0" x2="0" y2="1"><stop offset="0" stop-color="#cfcfcf"/><stop offset="1" stop-color="#e9e9e9"/></linearGradient>
</defs>
<rect x="-.3" y="-.6" width="32" height="32" rx="3" fill="url(#pvF)"/>
<rect x=".3" y="0" width="30.8" height="30.8" rx="2.6" fill="none" stroke="#f6f6f6" stroke-width=".7" opacity=".8"/>
<rect x="2.2" y="1.8" width="27" height="27.2" rx="1.6" fill="none" stroke="#a4a4a4" stroke-width=".7"/>
<rect x="2.9" y="2.5" width="25.6" height="25.8" rx="1.2" fill="none" stroke="#f0f0f0" stroke-width=".6" opacity=".8"/>
<path d="M2.6 6.5h1.6M2.6 10h1.6M2.6 21h1.6M2.6 24.5h1.6" stroke="#b0b0b0" stroke-width=".7"/>
<circle cx="15.3" cy="15.6" r="8.4" fill="#c4c4c4" opacity=".6"/>
<circle cx="15.3" cy="15" r="6.4" fill="url(#pvD)" stroke="#444" stroke-width="1.5"/>
<circle cx="15.3" cy="15" r="4.4" fill="none" stroke="#c6c6c6" stroke-width=".9" stroke-dasharray="1 .8"/>
<circle cx="15.3" cy="15" r="2.5" fill="#dedede" stroke="#bdbdbd" stroke-width=".6"/>
</svg></div>
<div class="lbl" style="left:275.4px;top:374.2px">Privacy</div>
<div class="ic" style="left:403.2px;top:338px"><svg viewBox="0 0 32 32" width="32" height="32"><defs>
<linearGradient id="ssF" x1="0" y1="0" x2="0" y2="1"><stop offset="0" stop-color="#f1f1f1"/><stop offset="1" stop-color="#c8c8c8"/></linearGradient>
<linearGradient id="ssB" x1="0" y1="0" x2="1" y2="1"><stop offset="0" stop-color="#1d1942"/><stop offset=".5" stop-color="#3f3672"/><stop offset="1" stop-color="#8473ac"/></linearGradient>
<linearGradient id="ssL" x1="0" y1="0" x2="0" y2="1"><stop offset="0" stop-color="#5b50a0"/><stop offset="1" stop-color="#41387c"/></linearGradient>
<clipPath id="ssC"><rect x="3.2" y="3.2" width="25.6" height="25.6" rx=".8"/></clipPath>
</defs>
<rect x=".2" y=".2" width="31.8" height="31.6" rx="2.6" fill="url(#ssF)"/>
<rect x="2.6" y="2.6" width="26.8" height="26.8" rx="1.2" fill="#8c88a0"/>
<g clip-path="url(#ssC)">
<rect x="3" y="3" width="26" height="26" fill="url(#ssB)"/>
<path d="M15 3 H29 V20 Q26 9 15 3Z" fill="#d8d8e0" opacity=".42"/>
</g>
<circle cx="16" cy="15.4" r="9.1" fill="#e0e0e5"/>
<circle cx="16" cy="15.4" r="9.2" fill="none" stroke="#fff" stroke-width=".6" opacity=".6"/>
<path d="M13.8 14.2 V12.6 A2.3 2.4 0 0 1 18.4 12.6 V14.2" fill="none" stroke="#4a4088" stroke-width="1.3"/>
<rect x="12.6" y="13.9" width="7" height="5" rx=".6" fill="url(#ssL)"/>
</svg></div>
<div class="lbl" style="left:364.8px;top:374.2px">Screensaver</div>
<div class="ic" style="left:492.5px;top:338px"><svg viewBox="0 0 32 32" width="32" height="32"><defs>
<linearGradient id="stF" x1="0" y1="0" x2="0" y2="1"><stop offset="0" stop-color="#efefef"/><stop offset="1" stop-color="#c6c6c6"/></linearGradient>
<linearGradient id="stB" x1="0" y1="0" x2="0" y2="1"><stop offset="0" stop-color="#ababab"/><stop offset="1" stop-color="#8c8c8c"/></linearGradient>
<linearGradient id="stR" x1="0" y1="0" x2="1" y2="0"><stop offset="0" stop-color="#d61c1c"/><stop offset=".45" stop-color="#f23a34"/><stop offset="1" stop-color="#b61212"/></linearGradient>
<clipPath id="stC"><path d="M15.5 3.6 C14 6.4 12.4 10.4 12.1 14.4 C12 17 12.8 19.4 13.6 21 L17.4 21 C18.2 19.4 19 17 18.9 14.4 C18.6 10.4 17 6.4 15.5 3.6Z"/></clipPath>
</defs>
<rect x=".2" y=".2" width="31.6" height="31.6" rx="2.6" fill="url(#stF)"/>
<rect x="2.6" y="2.6" width="26.8" height="26.8" rx="1.2" fill="#808080"/>
<rect x="3.1" y="3.1" width="25.8" height="25.8" rx=".8" fill="url(#stB)"/>
<path d="M12.8 16.4 C11.2 19 10.2 22 10.1 25.8 L11.9 25.8 C12.2 23.4 13 21.8 14 20.6Z" fill="#d01818"/>
<path d="M18.2 16.4 C19.8 19 20.8 22 20.9 25.8 L19.1 25.8 C18.8 23.4 18 21.8 17 20.6Z" fill="#c41414"/>
<path d="M15.5 3.6 C14 6.4 12.4 10.4 12.1 14.4 C12 17 12.8 19.4 13.6 21 L17.4 21 C18.2 19.4 19 17 18.9 14.4 C18.6 10.4 17 6.4 15.5 3.6Z" fill="url(#stR)"/>
<g clip-path="url(#stC)" fill="#fbf1ee"><rect x="11.5" y="11.4" width="1.7" height="2.1"/><rect x="14.9" y="11.4" width="1.7" height="2.1"/><rect x="18.3" y="11.4" width="1.7" height="2.1"/><rect x="13.2" y="13.5" width="1.7" height="2.1"/><rect x="16.6" y="13.5" width="1.7" height="2.1"/><rect x="11.5" y="15.6" width="1.7" height="2.1"/><rect x="14.9" y="15.6" width="1.7" height="2.1"/><rect x="18.3" y="15.6" width="1.7" height="2.1"/></g>
<path d="M15.5 18.4 C14.9 20.2 14.8 22 15.2 24 L15.8 24 C16.2 22 16.1 20.2 15.5 18.4Z" fill="#a80e0e"/>
</svg></div>
<div class="lbl" style="left:454.2px;top:374.2px">Startup<br>Applications</div>
<div class="ic" style="left:46.0px;top:416px"><svg viewBox="0 0 32 32" width="32" height="32"><defs>
<linearGradient id="wiF" x1="0" y1="0" x2="0" y2="1"><stop offset="0" stop-color="#eeeeee"/><stop offset=".2" stop-color="#dedede"/><stop offset="1" stop-color="#cfcfcf"/></linearGradient>
</defs>
<path d="M2.4 .3 H29 Q31.4 .3 31.4 2.7 V30 Q31.4 32.2 29.2 32.2 H2.2 Q0 32.2 0 30 V2.7 Q0 .3 2.4 .3Z" fill="url(#wiF)"/>
<rect x="1.7" y="6.9" width="27.9" height="22.7" fill="#ffffff"/>
<rect x="1.7" y="6.9" width="27.9" height=".6" fill="#c4c4c4"/>
<rect x="8.6" y="3.2" width="14.4" height="1.5" fill="#8e8e8e" opacity=".55"/>
<rect x="25.4" y=".4" width="3.6" height=".9" fill="#c8383c"/>
<rect x="2.4" y=".6" width="1.8" height=".9" fill="#555"/>
</svg></div>
<div class="lbl" style="left:6.6px;top:452.2px">Windows</div>
<div class="ic" style="left:135.3px;top:416px"><svg viewBox="0 0 32 32" width="32" height="32"><defs>
<linearGradient id="tiF" x1="0" y1="0" x2="0" y2="1"><stop offset="0" stop-color="#f0f0f0"/><stop offset="1" stop-color="#cdcdcd"/></linearGradient>
</defs>
<rect x=".1" y=".3" width="31.9" height="31.8" rx="2.8" fill="url(#tiF)"/>
<rect x="2.8" y="3" width="26.4" height="26.2" rx="1.4" fill="#6c6c6c"/>
<rect x="3.6" y="3.8" width="24.8" height="24.6" rx=".8" fill="#8f8f8f"/>
<rect x="16" y="4" width="12.2" height="12" fill="#9c9c9c"/>
<rect x="4.2" y="4" width="11.4" height="11.8" fill="#b6b6b6" stroke="#7a7a7a" stroke-width=".5"/>
<rect x="4.2" y="4" width="11.4" height="1.7" fill="#6e6e6e"/>
<rect x="4.2" y="16.6" width="23.8" height="11.4" fill="#b2b2b2" stroke="#7a7a7a" stroke-width=".5"/>
<rect x="4.2" y="16.6" width="23.8" height="1.6" fill="#6e6e6e"/>
</svg></div>
<div class="lbl" style="left:96.0px;top:452.2px">Window Tiling</div>
<div class="ic" style="left:224.6px;top:416px"><svg viewBox="0 0 32 32" width="32" height="32"><defs>
<linearGradient id="wsF" x1="0" y1="0" x2="0" y2="1"><stop offset="0" stop-color="#eeeeee"/><stop offset="1" stop-color="#cbcbcb"/></linearGradient>
<linearGradient id="wsP" x1="0" y1="0" x2="0" y2="1"><stop offset="0" stop-color="#b4b4b6"/><stop offset="1" stop-color="#a9a9ab"/></linearGradient>
</defs>
<rect x=".2" y=".3" width="31.9" height="31.8" rx="2.8" fill="url(#wsF)"/>
<rect x="3" y="3.2" width="26.2" height="26" rx="1.4" fill="#707074"/>
<rect x="4" y="4.2" width="11.4" height="11.6" rx=".5" fill="url(#wsP)"/>
<rect x="16.4" y="4.2" width="11.8" height="11.6" rx=".5" fill="url(#wsP)"/>
<rect x="4" y="16.8" width="11.4" height="11.4" rx=".5" fill="url(#wsP)"/>
<rect x="16.4" y="16.8" width="11.8" height="11.4" rx=".5" fill="url(#wsP)"/>
</svg></div>
<div class="lbl" style="left:185.8px;top:452.2px">Workspaces</div>
<div id="dash"></div><div id="bot1"></div><div id="bot2"></div><div id="lb"></div><div id="rb"></div>
</div>
</body></html>
